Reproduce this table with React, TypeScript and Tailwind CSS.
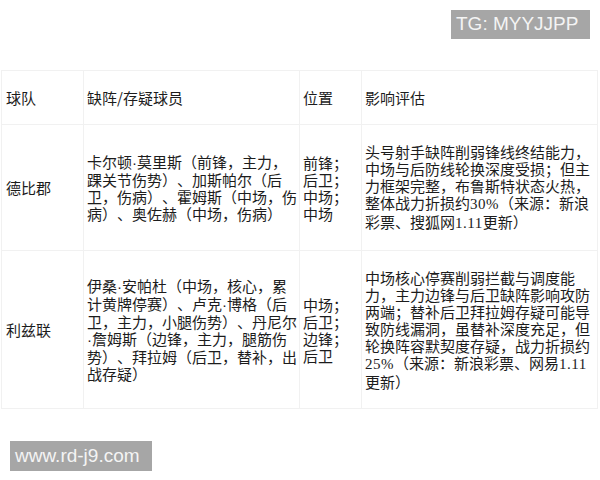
import React from "react";

const cell =
  "border border-[#f1f1f1] py-[18px] pl-[3px] align-middle leading-[17px]";
const num = "font-['Liberation_Serif',serif] tracking-[0.5px]";

// 人名中间的间隔点用窄字体
function Dot() {
  return <span className="font-['Liberation_Sans',sans-serif]">·</span>;
}

export default function App() {
  return (
    <div className="flex h-[480px] w-[600px] flex-col bg-white font-['Noto_Sans_CJK_SC',sans-serif] text-[15px] text-[#1c1c1c] [text-spacing-trim:space-all]">
      {/* 上方水印 */}
      <div className="flex justify-end pr-[10px] pt-[10px]">
        <div className="flex h-[29px] w-[139px] items-center bg-[#a6a6a6] pl-[5px] font-['Liberation_Sans',sans-serif] text-[19px] text-[#f4f4f4]">
          TG: MYYJJPP
        </div>
      </div>

      {/* 表格 */}
      <table className="ml-[1px] mt-[31px] w-[596px] table-fixed border-collapse">
        <colgroup>
          <col className="w-[82px]" />
          <col className="w-[216px]" />
          <col className="w-[62px]" />
          <col className="w-[236px]" />
        </colgroup>
        <tbody>
          <tr>
            <td className={`${cell} pl-[4px]`}>球队</td>
            <td className={`${cell} pr-[1px]`}>缺阵/存疑球员</td>
            <td className={cell}>位置</td>
            <td className={`${cell} pr-[6px]`}>影响评估</td>
          </tr>
          <tr>
            <td className={`${cell} pl-[4px]`}>德比郡</td>
            <td className={`${cell} pr-[1px]`}>
              卡尔顿<Dot />莫里斯（前锋，主力，踝关节伤势）、加斯帕尔（后卫，伤病）、霍姆斯（中场，伤病）、奥佐赫（中场，伤病）
            </td>
            <td className={cell}>
              前锋；
              <br />
              后卫；
              <br />
              中场；
              <br />
              中场
            </td>
            <td className={`${cell} pr-[6px]`}>
              头号射手缺阵削弱锋线终结能力，中场与后防线轮换深度受损；但主力框架完整，布鲁斯特状态火热，整体战力折损约
              <span className={num}>30%</span>
              （来源：新浪彩票、搜狐网<span className={num}>1.11</span>更新）
            </td>
          </tr>
          <tr>
            <td className={`${cell} pl-[4px]`}>利兹联</td>
            <td className={`${cell} pr-[1px]`}>
              伊桑<Dot />安帕杜（中场，核心，累计黄牌停赛）、卢克<Dot />博格（后卫，主力，小腿伤势）、丹尼尔<Dot />詹姆斯（边锋，主力，腿筋伤势）、拜拉姆（后卫，替补，出战存疑）
            </td>
            <td className={cell}>
              中场；
              <br />
              后卫；
              <br />
              边锋；
              <br />
              后卫
            </td>
            <td className={`${cell} pr-[6px]`}>
              中场核心停赛削弱拦截与调度能力，主力边锋与后卫缺阵影响攻防两端；替补后卫拜拉姆存疑可能导致防线漏洞，虽替补深度充足，但轮换阵容默契度存疑，战力折损约
              <span className={num}>25%</span>
              （来源：新浪彩票、网易<span className={num}>1.11</span>更新）
            </td>
          </tr>
        </tbody>
      </table>

      {/* 下方水印 */}
      <div className="ml-[10px] mt-[32px] flex h-[30px] w-[142px] items-center bg-[#a6a6a6] pl-[5px] font-['Liberation_Sans',sans-serif] text-[19px] text-[#f4f4f4]">
        www.rd-j9.com
      </div>
    </div>
  );
}
